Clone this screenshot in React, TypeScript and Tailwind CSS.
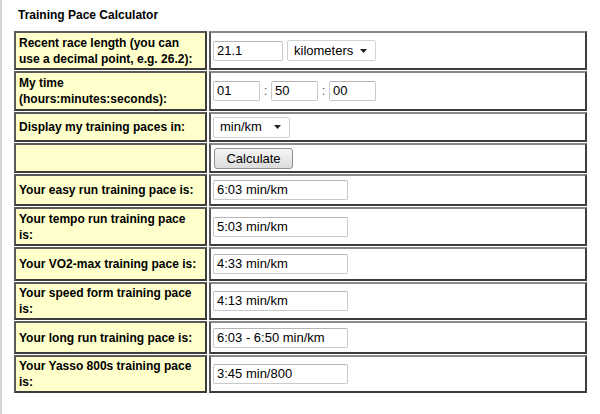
import type { ReactNode } from 'react'

const font = { fontFamily: '"Liberation Sans", Arial, sans-serif' }

function Caret() {
  return (
    <svg width="7" height="4" viewBox="0 0 7 4" className="ml-auto">
      <path d="M0 0h7L3.5 4z" fill="#222" />
    </svg>
  )
}

function TextBox({ value, w }: { value: string; w: string }) {
  return (
    <div
      className={`${w} h-[20px] flex items-center px-[3px] bg-white border border-[#c9c9c9] border-t-[#b5b5b5] rounded-[2px] text-[13px] text-black`}
    >
      {value}
    </div>
  )
}

function Select({ value, w }: { value: string; w: string }) {
  return (
    <div
      className={`${w} h-[21px] flex items-center pl-[6px] pr-[8px] bg-white border border-[#d2d2d2] rounded-[2px] text-[13px] text-black`}
    >
      <span>{value}</span>
      <Caret />
    </div>
  )
}

function Row({ label, h, children }: { label: ReactNode; h: string; children: ReactNode }) {
  return (
    <tr>
      <td
        className={`${h} w-[193px] bg-[#ffffcc] border-2 border-[#3c3c3c] border-t-[#5a5a5a] border-l-[#5a5a5a] px-[3px] align-middle text-[12px] leading-[16px] font-bold text-black`}
      >
        {label}
      </td>
      <td className={`${h} border-2 border-[#3c3c3c] border-t-[#8a8a8a] border-l-[#5a5a5a] px-[2px] align-middle bg-white`}>
        {children}
      </td>
    </tr>
  )
}

const results = [
  { label: 'Your easy run training pace is:', value: '6:03 min/km', h: 'h-[32px]' },
  { label: 'Your tempo run training pace is:', value: '5:03 min/km', h: 'h-[39px]' },
  { label: 'Your VO2-max training pace is:', value: '4:33 min/km', h: 'h-[34px]' },
  { label: 'Your speed form training pace is:', value: '4:13 min/km', h: 'h-[38px]' },
  { label: 'Your long run training pace is:', value: '6:03 - 6:50 min/km', h: 'h-[33px]' },
  { label: 'Your Yasso 800s training pace is:', value: '3:45 min/800', h: 'h-[38px]' },
]

export default function App() {
  return (
    <div className="w-[600px] h-[414px] bg-white border-l-2 border-[#d4d4d4] overflow-hidden" style={font}>
      <div className="pl-[12px] pt-[8px]">
        <h1 className="text-[12px] leading-[14px] font-bold text-black pl-[4px] mb-[8px]">Training Pace Calculator</h1>
        <table className="border-separate border-spacing-x-[2px] border-spacing-y-[1px] -ml-[2px] w-[577px]">
          <tbody>
            <Row label="Recent race length (you can use a decimal point, e.g. 26.2):" h="h-[39px]">
              <div className="flex items-center gap-[4px]">
                <TextBox value="21.1" w="w-[70px]" />
                <Select value="kilometers" w="w-[89px]" />
              </div>
            </Row>
            <Row label="My time (hours:minutes:seconds):" h="h-[40px]">
              <div className="flex items-center text-[13px] text-[#555]">
                <TextBox value="01" w="w-[47px]" />
                <span className="w-[11px] text-center">:</span>
                <TextBox value="50" w="w-[47px]" />
                <span className="w-[11px] text-center">:</span>
                <TextBox value="00" w="w-[47px]" />
              </div>
            </Row>
            <Row label="Display my training paces in:" h="h-[30px]">
              <Select value="min/km" w="w-[77px]" />
            </Row>
            <Row label="" h="h-[30px]">
              <button className="ml-[1px] w-[79px] h-[21px] rounded-[3px] border border-[#8f8f8f] bg-gradient-to-b from-[#f6f6f6] to-[#dcdcdc] text-[13px] text-black leading-none">
                Calculate
              </button>
            </Row>
            {results.map((r) => (
              <Row key={r.label} label={r.label} h={r.h}>
                <TextBox value={r.value} w="w-[135px]" />
              </Row>
            ))}
          </tbody>
        </table>
      </div>
    </div>
  )
}
